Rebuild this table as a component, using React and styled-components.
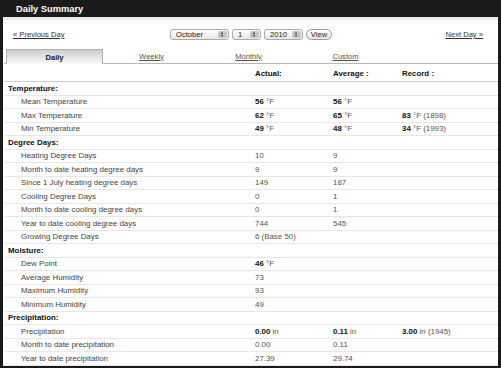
import React from "react";
import styled, { createGlobalStyle } from "styled-components";

const Global = createGlobalStyle`
  html, body {
    margin: 0;
    padding: 0;
    background: #fff;
  }
  body {
    font-family: "Liberation Sans", Arial, sans-serif;
  }
`;

const Frame = styled.div`
  width: 501px;
  height: 368px;
  box-sizing: border-box;
  background: #1a1a1a;
  padding: 0 3px 2px 3px;
  display: flex;
  flex-direction: column;
  overflow: hidden;
`;

const TitleBar = styled.div`
  height: 17px;
  flex: 0 0 17px;
  display: flex;
  align-items: center;
  padding-left: 13px;
  color: #fff;
  font-weight: bold;
  font-size: 9.3px;
  border-radius: 3px 3px 0 0;
`;

const Body = styled.div`
  flex: 1;
  background: #fff;
  border-top: 3px solid #ececec;
  padding: 0 0 0 1px;
  display: flex;
  flex-direction: column;
  overflow: hidden;
`;

const NavRow = styled.div`
  height: 29px;
  flex: 0 0 29px;
  display: flex;
  align-items: center;
  padding: 0 15px 0 9px;
  font-size: 7.6px;
  color: #333;
`;

const NavLink = styled.a`
  color: #333;
  text-decoration: underline;
  flex: 0 0 auto;
`;

const Picker = styled.div`
  flex: 1;
  display: flex;
  justify-content: center;
  align-items: center;
  gap: 3px;
  padding-right: 8px;
`;

const Select = styled.div`
  width: ${(p) => p.$w}px;
  height: 11px;
  box-sizing: border-box;
  border: 1px solid #aaa;
  border-radius: 3px;
  background: linear-gradient(#fff, #e6e6e6);
  display: flex;
  align-items: center;
  justify-content: space-between;
  padding: 0 1px 0 5px;
  font-size: 7.6px;
  color: #222;
`;

const Stepper = styled.span`
  width: 9px;
  height: 7px;
  border-radius: 2px;
  background: #c4c4c4;
  display: flex;
  flex-direction: column;
  align-items: center;
  justify-content: center;
  gap: 1px;
  &::before,
  &::after {
    content: "";
    width: 0;
    height: 0;
    border-left: 1.5px solid transparent;
    border-right: 1.5px solid transparent;
  }
  &::before {
    border-bottom: 2px solid #222;
  }
  &::after {
    border-top: 2px solid #222;
  }
`;

const Button = styled.div`
  width: 26px;
  height: 11px;
  box-sizing: border-box;
  border: 1px solid #999;
  border-radius: 6px;
  background: linear-gradient(#fff, #e6e6e6);
  display: flex;
  align-items: center;
  justify-content: center;
  font-size: 7.6px;
  color: #222;
`;

const Tabs = styled.div`
  display: flex;
  height: 14px;
  flex: 0 0 14px;
  padding-left: 2px;
  border-bottom: 1px solid #b8b8b8;
  font-size: 7.6px;
`;

const Tab = styled.div`
  width: 97px;
  box-sizing: border-box;
  display: flex;
  align-items: center;
  justify-content: center;
  color: ${(p) => (p.$active ? "#222" : "#555")};
  font-weight: ${(p) => (p.$active ? "bold" : "normal")};
  text-decoration: ${(p) => (p.$active ? "none" : "underline")};
  background: ${(p) =>
    p.$active ? "linear-gradient(#cdcdcd, #fafafa)" : "transparent"};
  border: ${(p) => (p.$active ? "1px solid #b0b0b0" : "none")};
  border-bottom: none;
  margin-bottom: ${(p) => (p.$active ? "-1px" : "0")};
`;

const Table = styled.div`
  display: flex;
  flex-direction: column;
  font-size: 7.9px;
`;

const Row = styled.div`
  display: grid;
  grid-template-columns: 246px 78px 69px 1fr;
  height: ${(p) => (p.$head ? "18px" : "13.5px")};
  flex: 0 0 auto;
  box-sizing: border-box;
  align-items: ${(p) => (p.$head ? "end" : "center")};
  padding-bottom: ${(p) => (p.$head ? "3px" : "0")};
  border-bottom: 1px solid ${(p) => (p.$head ? "#cfcfcf" : "#e8e8e8")};
  color: #444;
`;

const Label = styled.div`
  padding-left: ${(p) => (p.$cat ? "4px" : "17px")};
  font-weight: ${(p) => (p.$cat ? "bold" : "normal")};
  color: ${(p) => (p.$cat ? "#111" : "#444")};
`;

const Cell = styled.div`
  padding-left: 5px;
  color: ${(p) => (p.$head ? "#111" : "#555")};
  font-weight: ${(p) => (p.$head ? "bold" : "normal")};
  b {
    color: #111;
  }
`;

const rows = [
  { cat: "Temperature:" },
  { label: "Mean Temperature", a: [56, " °F"], v: [56, " °F"] },
  { label: "Max Temperature", a: [62, " °F"], v: [65, " °F"], r: [83, " °F (1898)"] },
  { label: "Min Temperature", a: [49, " °F"], v: [48, " °F"], r: [34, " °F (1993)"] },
  { cat: "Degree Days:" },
  { label: "Heating Degree Days", a: "10", v: "9" },
  { label: "Month to date heating degree days", a: "9", v: "9" },
  { label: "Since 1 July heating degree days", a: "149", v: "187" },
  { label: "Cooling Degree Days", a: "0", v: "1" },
  { label: "Month to date cooling degree days", a: "0", v: "1" },
  { label: "Year to date cooling degree days", a: "744", v: "545" },
  { label: "Growing Degree Days", a: "6 (Base 50)" },
  { cat: "Moisture:" },
  { label: "Dew Point", a: [46, " °F"] },
  { label: "Average Humidity", a: "73" },
  { label: "Maximum Humidity", a: "93" },
  { label: "Minimum Humidity", a: "49" },
  { cat: "Precipitation:" },
  { label: "Precipitation", a: ["0.00", " in"], v: ["0.11", " in"], r: ["3.00", " in (1945)"] },
  { label: "Month to date precipitation", a: "0.00", v: "0.11" },
  { label: "Year to date precipitation", a: "27.39", v: "29.74" },
];

const Value = ({ v }) => {
  if (v == null) return <Cell />;
  if (Array.isArray(v))
    return (
      <Cell>
        <b>{v[0]}</b>
        {v[1]}
      </Cell>
    );
  return <Cell>{v}</Cell>;
};

const App = () => {
  return (
    <>
      <Global />
      <Frame>
        <TitleBar>Daily Summary</TitleBar>
        <Body>
          <NavRow>
            <NavLink>« Previous Day</NavLink>
            <Picker>
              <Select $w={59}>
                October
                <Stepper />
              </Select>
              <Select $w={29}>
                1
                <Stepper />
              </Select>
              <Select $w={39}>
                2010
                <Stepper />
              </Select>
              <Button>View</Button>
            </Picker>
            <NavLink>Next Day »</NavLink>
          </NavRow>
          <Tabs>
            <Tab $active>Daily</Tab>
            <Tab>Weekly</Tab>
            <Tab>Monthly</Tab>
            <Tab>Custom</Tab>
          </Tabs>
          <Table>
            <Row $head>
              <Label />
              <Cell $head>Actual:</Cell>
              <Cell $head>Average :</Cell>
              <Cell $head>Record :</Cell>
            </Row>
            {rows.map((r, i) =>
              r.cat ? (
                <Row key={i}>
                  <Label $cat>{r.cat}</Label>
                </Row>
              ) : (
                <Row key={i}>
                  <Label>{r.label}</Label>
                  <Value v={r.a} />
                  <Value v={r.v} />
                  <Value v={r.r} />
                </Row>
              )
            )}
          </Table>
        </Body>
      </Frame>
    </>
  );
};

export default App;
